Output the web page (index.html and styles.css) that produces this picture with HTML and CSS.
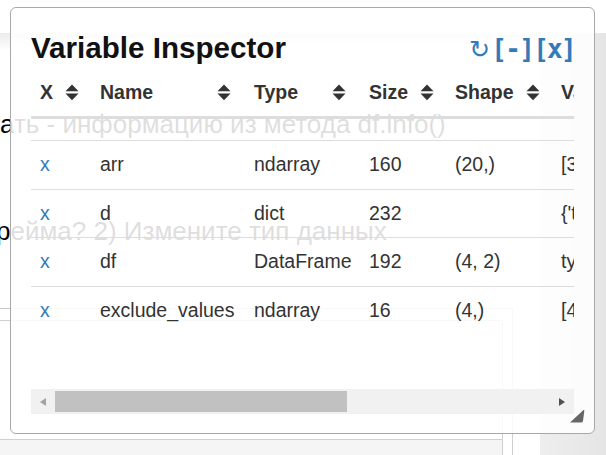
FILE: index.html
```html
<!DOCTYPE html>
<html lang="ru">
<head>
<meta charset="utf-8">
<title>Variable Inspector</title>
<link rel="stylesheet" href="styles.css">
</head>
<body>
<div class="page">
  <div class="topbar"></div>
  <div class="nb">
    <div class="nb-main">
      <p class="bg-line line1">ать - информацию из метода df.info()</p>
      <p class="bg-line line2">рейма? 2) Измените тип данных</p>
      <div class="cell-outer">
        <div class="cell-inner"></div>
        <div class="cell-foot"></div>
      </div>
    </div>
    <div class="nb-side"></div>
  </div>
</div>

<div class="vi">
  <div class="vi-head">
    <h3 class="vi-title">Variable Inspector</h3>
    <div class="vi-actions"><a class="vi-reload">↻</a><a class="vi-btn">[-]</a><a class="vi-btn">[x]</a></div>
  </div>
  <div class="vi-scroll">
    <table class="vi-table">
      <colgroup>
        <col class="c-x"><col class="c-name"><col class="c-type"><col class="c-size"><col class="c-shape"><col class="c-value">
      </colgroup>
      <thead>
        <tr>
          <th><div class="th-in"><span>X</span><svg class="sort" viewBox="0 0 14 17"><path d="M0.5 7.2 L7 0.6 L13.5 7.2 Z M0.5 9.6 L13.5 9.6 L7 16.3 Z"/></svg></div></th>
          <th><div class="th-in"><span>Name</span><svg class="sort" viewBox="0 0 14 17"><path d="M0.5 7.2 L7 0.6 L13.5 7.2 Z M0.5 9.6 L13.5 9.6 L7 16.3 Z"/></svg></div></th>
          <th><div class="th-in"><span>Type</span><svg class="sort" viewBox="0 0 14 17"><path d="M0.5 7.2 L7 0.6 L13.5 7.2 Z M0.5 9.6 L13.5 9.6 L7 16.3 Z"/></svg></div></th>
          <th><div class="th-in"><span>Size</span><svg class="sort" viewBox="0 0 14 17"><path d="M0.5 7.2 L7 0.6 L13.5 7.2 Z M0.5 9.6 L13.5 9.6 L7 16.3 Z"/></svg></div></th>
          <th><div class="th-in"><span>Shape</span><svg class="sort" viewBox="0 0 14 17"><path d="M0.5 7.2 L7 0.6 L13.5 7.2 Z M0.5 9.6 L13.5 9.6 L7 16.3 Z"/></svg></div></th>
          <th><div class="th-in"><span>Value</span><svg class="sort" viewBox="0 0 14 17"><path d="M0.5 7.2 L7 0.6 L13.5 7.2 Z M0.5 9.6 L13.5 9.6 L7 16.3 Z"/></svg></div></th>
        </tr>
      </thead>
      <tbody>
        <tr class="gap"><td colspan="6"></td></tr>
        <tr><td><a class="del">x</a></td><td>arr</td><td>ndarray</td><td>160</td><td>(20,)</td><td>[3 7 1 9 4 2 8 5 6 0 3 7 1 9 4 2 8 5 6 0]</td></tr>
        <tr><td><a class="del">x</a></td><td>d</td><td>dict</td><td>232</td><td></td><td>{'type': 'int', 'count': 4}</td></tr>
        <tr><td><a class="del">x</a></td><td>df</td><td>DataFrame</td><td>192</td><td>(4, 2)</td><td>type value 0 a 1 1 b 2</td></tr>
        <tr><td><a class="del">x</a></td><td>exclude_values</td><td>ndarray</td><td>16</td><td>(4,)</td><td>[4 8 15 16]</td></tr>
      </tbody>
    </table>
  </div>
  <div class="vi-hbar">
    <div class="hb-btn"><span class="arrow-left"></span></div>
    <div class="hb-track"><div class="hb-thumb"></div></div>
    <div class="hb-btn"><span class="arrow-right"></span></div>
  </div>
  <svg class="grip" viewBox="0 0 16 14"><path d="M1 13.5 L14.5 1 Q15.5 0.5 15.3 2 L14 12 Q13.6 13.6 12 13.6 Z"/></svg>
</div>
</body>
</html>
```

FILE: styles.css
```css
* { box-sizing: border-box; }

html, body {
  margin: 0;
  padding: 0;
  width: 606px;
  height: 455px;
  overflow: hidden;
  background: #fff;
  font-family: "Liberation Sans", Arial, Helvetica, sans-serif;
}

/* ---------- background notebook ---------- */
.page {
  width: 606px;
  height: 455px;
  display: flex;
  flex-direction: column;
  overflow: hidden;
}

.topbar {
  height: 33px;
  background: #fff;
  flex: none;
}

.nb {
  flex: 1;
  display: flex;
  min-height: 0;
}

.nb-main {
  width: 540px;
  background: linear-gradient(#ebebeb, #fff 18px);
  padding-top: 73px;
  overflow: hidden;
}

.nb-side {
  flex: 1;
  background: linear-gradient(to right, #eeeeee, #e5e5e5);
}

.bg-line {
  margin: 0;
  font-size: 26px;
  line-height: 36px;
  color: #000;
  white-space: nowrap;
}

.line1 { margin-left: 0; }
.line2 { margin-top: 71px; margin-left: -4px; }

.cell-outer {
  margin-top: 59px;
  margin-left: -10px;
  width: 523px;
  border-top: 1px solid #c8c8c8;
  border-right: 1px solid #cfcfcf;
  height: 160px;
  padding-top: 11px;
}

.cell-inner {
  width: 513px;
  height: 120px;
  border: 1px solid #cfcfcf;
  border-left: none;
  background: #fff;
}

.cell-foot {
  width: 513px;
  height: 28px;
  background: #f5f5f5;
  border-right: 1px solid #cfcfcf;
}

/* ---------- variable inspector popup ---------- */
.vi {
  position: absolute;
  left: 10px;
  top: 7px;
  width: 585px;
  height: 427px;
  border: 1px solid #a8a8a8;
  border-radius: 6px;
  background: rgba(255, 255, 255, 0.87);
  padding: 22px 20px 19px;
  display: flex;
  flex-direction: column;
}

.vi-head {
  display: flex;
  justify-content: space-between;
  align-items: baseline;
  margin-bottom: 2px;
}

.vi-title {
  margin: 0;
  font-size: 29.6px;
  line-height: 36px;
  font-weight: bold;
  color: #111;
}

.vi-actions {
  color: #337ab7;
  font-family: "DejaVu Sans Mono", monospace;
  font-weight: bold;
  font-size: 26px;
  letter-spacing: -1.7px;
  line-height: 36px;
  white-space: nowrap;
  margin-right: -1px;
}

.vi-reload {
  font-family: "DejaVu Sans", sans-serif;
  font-weight: normal;
  font-size: 25px;
  letter-spacing: 0;
  margin-right: 1px;
}

.vi-scroll {
  flex: 1;
  overflow: hidden;
}

.vi-table {
  border-collapse: collapse;
  table-layout: fixed;
  width: 821px;
  font-size: 19.5px;
  color: #333;
}

.c-x { width: 60px; }
.c-name { width: 154px; }
.c-type { width: 115px; }
.c-size { width: 86px; }
.c-shape { width: 106px; }
.c-value { width: 300px; }

.vi-table th {
  text-align: left;
  font-weight: bold;
  line-height: 28px;
  padding: 8px 14px 10px 9px;
  border-bottom: 3px solid #dddddd;
  white-space: nowrap;
}

.th-in {
  display: flex;
  justify-content: space-between;
  align-items: center;
  gap: 12px;
}

.sort {
  width: 14px;
  height: 17px;
  fill: #333;
  flex: none;
}

.vi-table td {
  padding: 10px 9px;
  line-height: 27.5px;
  border-top: 1px solid #dddddd;
  white-space: nowrap;
  overflow: hidden;
}

.vi-table tr.gap td {
  height: 23px;
  padding: 0;
  border-top: none;
  line-height: 0;
}

.del {
  color: #337ab7;
}

/* fake horizontal scrollbar */
.vi-hbar {
  height: 25px;
  flex: none;
  display: flex;
  background: #f1f1f1;
}

.hb-btn {
  width: 24px;
  flex: none;
  display: flex;
  align-items: center;
  justify-content: center;
}

.hb-track {
  flex: 1;
  padding: 2px 0;
}

.hb-thumb {
  width: 292px;
  height: 100%;
  background: #c1c1c1;
}

.arrow-left {
  width: 0;
  height: 0;
  border-top: 4px solid transparent;
  border-bottom: 4px solid transparent;
  border-right: 6px solid #a3a3a3;
}

.arrow-right {
  width: 0;
  height: 0;
  border-top: 4px solid transparent;
  border-bottom: 4px solid transparent;
  border-left: 6px solid #505050;
}

.grip {
  position: absolute;
  right: 9px;
  bottom: 10px;
  width: 16px;
  height: 14px;
  fill: #666;
}
```
